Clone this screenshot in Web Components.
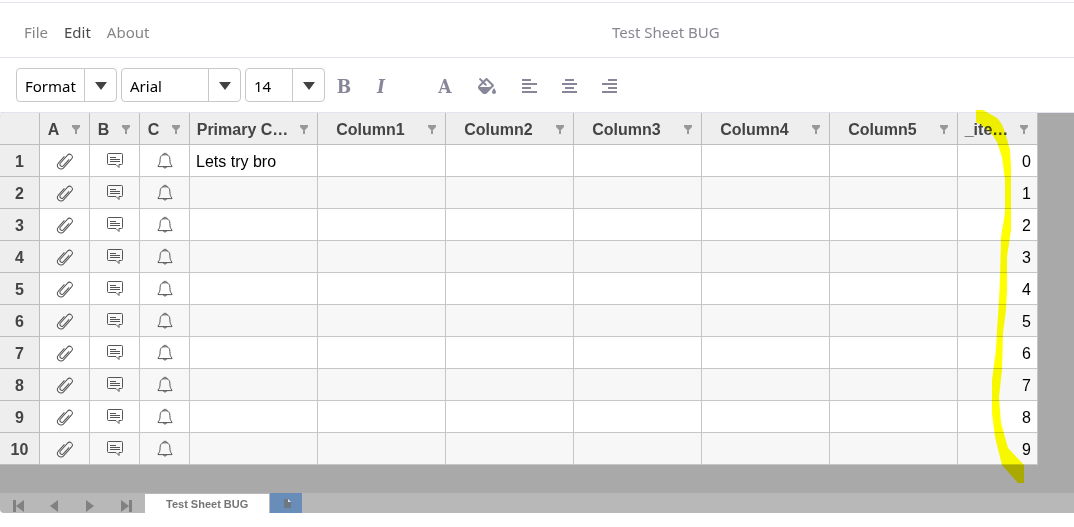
<!DOCTYPE html>
<html lang="en">
<head>
<meta charset="utf-8">
<title>Test Sheet BUG</title>
<style>
  body {
    margin: 0;
    background: #fff;
    font-family: "Noto Sans", "Open Sans", sans-serif;
    font-size: 15px;
  }
</style>
</head>
<body>
<sheet-app></sheet-app>

<script>
// shared helper: open shadow root filled from a template
class BaseElement extends HTMLElement {
  constructor() {
    super();
    this.attachShadow({ mode: "open" });
    const template = document.createElement("template");
    template.innerHTML = this.render();
    this.shadowRoot.appendChild(template.content.cloneNode(true));
  }
}

class MenuBar extends BaseElement {
  render() {
    return `
    <style>
      :host {
        display: flex;
        align-items: center;
        height: 50px;
        margin-top: 2px;
        padding-top: 4px;
        border-top: 1px solid #e3e3ee;
        border-bottom: 1px solid #e3e3ee;
      }
      nav {
        display: flex;
        gap: 16px;
        width: 24%;
        padding-left: 24px;
        box-sizing: border-box;
      }
      a {
        color: #868686;
        text-decoration: none;
      }
      a.active {
        color: #4a4a4a;
      }
      .title {
        flex: 1;
        text-align: center;
        color: #878793;
      }
    </style>
    <nav>
      <a href="#file">File</a>
      <a href="#edit" class="active">Edit</a>
      <a href="#about">About</a>
    </nav>
    <div class="title"><slot></slot></div>
    `;
  }
}

class DropDown extends HTMLElement {
  connectedCallback() {
    this.attachShadow({ mode: "open" });
    this.shadowRoot.innerHTML = `
    <style>
      :host {
        display: grid;
        height: 32px;
        border: 1px solid #c8c8c8;
        border-radius: 4px;
      }
      select, .arrow {
        grid-area: 1 / 1;
      }
      select {
        appearance: none;
        border: 0;
        margin: 0;
        padding: 2px 34px 0 8px;
        width: 100%;
        background: transparent;
        color: #000;
        font: inherit;
      }
      .arrow {
        justify-self: end;
        display: flex;
        align-items: center;
        justify-content: center;
        width: 32px;
        padding-top: 2px;
        box-sizing: border-box;
        border-left: 1px solid #c8c8c8;
        pointer-events: none;
      }
    </style>
    <select aria-label="${this.getAttribute("label")}">
      <option>${this.getAttribute("value")}</option>
    </select>
    <span class="arrow">
      <svg width="12" height="8" viewBox="0 0 12 8"><path d="M0 0h12L6 8z" fill="#424242"/></svg>
    </span>
    `;
  }
}

class ToolBar extends BaseElement {
  render() {
    return `
    <style>
      :host {
        display: flex;
        align-items: center;
        height: 54px;
        padding-left: 16px;
        border-bottom: 1px solid #e3e3ee;
      }
      .selects {
        display: flex;
        gap: 4px;
        margin-right: 5px;
      }
      .format { width: 99px; }
      .font { width: 118px; }
      .size { width: 78px; }
      .group {
        display: flex;
        gap: 12px;
        padding-top: 2px;
      }
      .style { gap: 9px; margin-right: 36px; }
      .colour { gap: 14px; margin-right: 14px; }
      button {
        display: flex;
        align-items: center;
        justify-content: center;
        width: 28px;
        height: 28px;
        padding: 0;
        border: 0;
        background: none;
        color: #878799;
        font: bold 19px "DejaVu Serif Condensed", "DejaVu Serif", serif;
      }
      .italic { font-style: italic; }
      svg { fill: currentColor; }
    </style>
    <div class="selects">
      <drop-down class="format" label="Format" value="Format"></drop-down>
      <drop-down class="font" label="Font" value="Arial"></drop-down>
      <drop-down class="size" label="Font size" value="14"></drop-down>
    </div>
    <div class="group style">
      <button aria-label="Bold">B</button>
      <button class="italic" aria-label="Italic">I</button>
    </div>
    <div class="group colour">
      <button aria-label="Text colour">A</button>
      <button aria-label="Fill colour">
        <svg width="18" height="16" viewBox="0 0 576 512">
          <path d="M512 320s-64 92-64 128c0 35 29 64 64 64s64-29 64-64-64-128-64-128z"/>
          <path fill-rule="evenodd" d="M503 217 295 9c-12-12-33-12-45 0l-82 82L82 5c-6-6-16-6-23 0L37 27c-6 7-6 17 0 23l86 86-95 95c-37 37-37 98 0 136l117 117c38 37 99 37 136 0l222-222c12-12 12-32 0-45zM386 288H66c1-4 3-10 7-14l95-93 59 59c12 12 32 12 45 0s12-33 0-45l-59-59 59-59 162 162z"/>
        </svg>
      </button>
    </div>
    <div class="group">
      <button aria-label="Align left">
        <svg width="16" height="16" viewBox="0 0 16 16"><path d="M1 1h9v2H1zM1 5h15v2H1zM1 9h9v2H1zM1 13h15v2H1z"/></svg>
      </button>
      <button aria-label="Align centre">
        <svg width="16" height="16" viewBox="0 0 16 16"><path d="M4 1h9v2H4zM1 5h15v2H1zM4 9h9v2H4zM1 13h15v2H1z"/></svg>
      </button>
      <button aria-label="Align right">
        <svg width="16" height="16" viewBox="0 0 16 16"><path d="M7 1h9v2H7zM1 5h15v2H1zM7 9h9v2H7zM1 13h15v2H1z"/></svg>
      </button>
    </div>
    `;
  }
}

const CLIP = `<svg width="18" height="18" viewBox="0 0 18 18"><path transform="rotate(42 9 9)" d="M5.500 6v9a3.500 3.500 0 0 0 7 0V3a2.750 2.750 0 0 0-5.500 0v10.500a2 2 0 0 0 4 0V5"/></svg>`;
const NOTE = `<svg width="18" height="18" viewBox="0 0 18 18"><path d="M2.500 1.500h13q1 0 1 1v9q0 1-1 1h-2.500v3l-3-3H2.500q-1 0-1-1v-9q0-1 1-1zM4 5.500h6M4 7.500h10M4 9.500h10"/></svg>`;
const BELL = `<svg width="18" height="18" viewBox="0 0 18 18"><path d="M7 2.800c0-2 4-2 4 0 2 .7 2.900 2.200 2.900 4.700 0 3.500.6 5 2.100 6.500v.6H2V14c1.500-1.500 2.100-3 2.100-6.500 0-2.500.9-4 2.900-4.700zM7 2.800h4M7.200 14.800c.3 1.600 3.300 1.600 3.600 0"/></svg>`;
const FILTER = `<svg width="9" height="10" viewBox="0 0 9 10"><path d="M0 0h8v2L5 5v4H3V5L0 2z" fill="#999"/></svg>`;

class SheetGrid extends BaseElement {
  render() {
    const columns = ["A", "B", "C", "Primary C…", "Column1", "Column2", "Column3", "Column4", "Column5", "_ite…"];
    const head = columns.map((name) => `
      <th scope="col"><div class="head"><span>${name}</span><button aria-label="Filter ${name}">${FILTER}</button></div></th>`).join("");

    let rows = "";
    for (let i = 0; i < 10; i++) {
      rows += `
      <tr>
        <th scope="row">${i + 1}</th>
        <td class="icon">${CLIP}</td>
        <td class="icon">${NOTE}</td>
        <td class="icon">${BELL}</td>
        <td>${i === 0 ? "Lets try bro" : ""}</td>
        <td></td><td></td><td></td><td></td><td></td>
        <td class="number">${i}</td>
      </tr>`;
    }

    return `
    <style>
      :host {
        display: block;
        padding-bottom: 28px;
        background: #a9a9a9;
        border-top-left-radius: 4px;
        font-family: "Liberation Sans", Arial, sans-serif;
        font-size: 16px;
      }
      .sheet {
        position: relative;
        width: max-content;
      }
      table {
        table-layout: fixed;
        width: min-content;
        border-collapse: separate;
        border-spacing: 0;
      }
      .c-row { width: 40px; }
      .c-icon { width: 50px; }
      .c-text { width: 128px; }
      .c-item { width: 80px; }
      th, td {
        box-sizing: border-box;
        height: 32px;
        padding: 2px 6px 0;
        border-right: 1px solid #c6c6c6;
        border-bottom: 1px solid #c6c6c6;
        background: #fff;
        line-height: 18px;
        white-space: nowrap;
      }
      th {
        padding: 2px 0 0;
        background: #eee;
        border-color: #bdbdbd;
        color: #444;
      }
      thead th:first-child {
        border-top-left-radius: 4px;
      }
      tbody tr:nth-child(even) td {
        background: #f7f7f7;
      }
      .head {
        display: flex;
        align-items: center;
        padding: 0 8px 0 4px;
      }
      .head span {
        flex: 1;
        min-width: 0;
        text-align: center;
      }
      .head button {
        display: flex;
        justify-content: flex-end;
        width: 18px;
        padding: 0;
        border: 0;
        background: none;
      }
      .icon {
        padding: 0;
      }
      .icon svg {
        display: block;
        margin: 0 auto;
        fill: none;
        stroke: #555;
        stroke-width: 1;
      }
      .number {
        text-align: right;
      }
      /* marker stroke drawn over the last column */
      .marker {
        position: absolute;
        top: -3px;
        right: 14px;
        mix-blend-mode: multiply;
        pointer-events: none;
      }
    </style>
    <div class="sheet">
      <table>
        <colgroup>
          <col class="c-row">
          <col class="c-icon" span="3">
          <col class="c-text" span="6">
          <col class="c-item">
        </colgroup>
        <thead><tr><th></th>${head}</tr></thead>
        <tbody>${rows}</tbody>
      </table>
      <svg class="marker" width="48" height="373" viewBox="0 0 48 373">
        <path fill="#ff0" d="M0 0V12Q14 19 21 32L26 47L29 70V103L25 127L24 170L23 190L21 220L20 240L16 270V303L19 327L26 355L42 373H48V355L32 338L25 313L23 287L26 260L27 223L30 200L31 180V147L35 120V57L34 40L29 22Q26 13 21 8L7 0z"/>
      </svg>
    </div>
    `;
  }
}

class SheetTabs extends BaseElement {
  render() {
    return `
    <style>
      :host {
        display: flex;
        align-items: flex-end;
        height: 20px;
        background: #b8b8b8;
        border-bottom-left-radius: 4px;
        overflow: hidden;
        font: bold 11px "Liberation Sans", Arial, sans-serif;
      }
      button {
        padding: 0;
        border: 0;
        background: none;
        font: inherit;
      }
      .pager {
        display: flex;
        gap: 20px;
        padding: 0 11px 0 10px;
      }
      .pager button {
        display: flex;
        align-items: center;
        justify-content: center;
        width: 16px;
        height: 14px;
      }
      .pager svg { fill: #818181; }
      .tab {
        height: 19px;
        padding: 0 21px;
        margin-right: 1px;
        background: #fff;
        color: #757575;
      }
      .add {
        display: flex;
        align-items: center;
        justify-content: center;
        width: 32px;
        height: 20px;
        padding-left: 3px;
        background: #678db8;
      }
    </style>
    <div class="pager">
      <button aria-label="First sheet"><svg width="12" height="12" viewBox="0 0 12 12"><path d="M1 0h3v12H1zM12 0v12L4 6z"/></svg></button>
      <button aria-label="Previous sheet"><svg width="8" height="12" viewBox="0 0 8 12"><path d="M8 0v12L0 6z"/></svg></button>
      <button aria-label="Next sheet"><svg width="8" height="12" viewBox="0 0 8 12"><path d="M0 0v12l8-6z"/></svg></button>
      <button aria-label="Last sheet"><svg width="12" height="12" viewBox="0 0 12 12"><path d="M9 0h3v12H9zM1 0v12l8-6z"/></svg></button>
    </div>
    <button class="tab"><slot></slot></button>
    <button class="add" aria-label="Add sheet">
      <svg width="7" height="9" viewBox="0 0 7 9"><path d="M0 0h4v3h3v6H0z" fill="#6f7780"/><path d="M4 0l3 3H4z" fill="#e4e9ef"/></svg>
    </button>
    `;
  }
}

class SheetApp extends BaseElement {
  render() {
    return `
    <style>
      :host { display: flow-root; }
    </style>
    <menu-bar>Test Sheet BUG</menu-bar>
    <tool-bar></tool-bar>
    <sheet-grid></sheet-grid>
    <sheet-tabs>Test Sheet BUG</sheet-tabs>
    `;
  }
}

customElements.define("menu-bar", MenuBar);
customElements.define("drop-down", DropDown);
customElements.define("tool-bar", ToolBar);
customElements.define("sheet-grid", SheetGrid);
customElements.define("sheet-tabs", SheetTabs);
customElements.define("sheet-app", SheetApp);
</script>
</body>
</html>
